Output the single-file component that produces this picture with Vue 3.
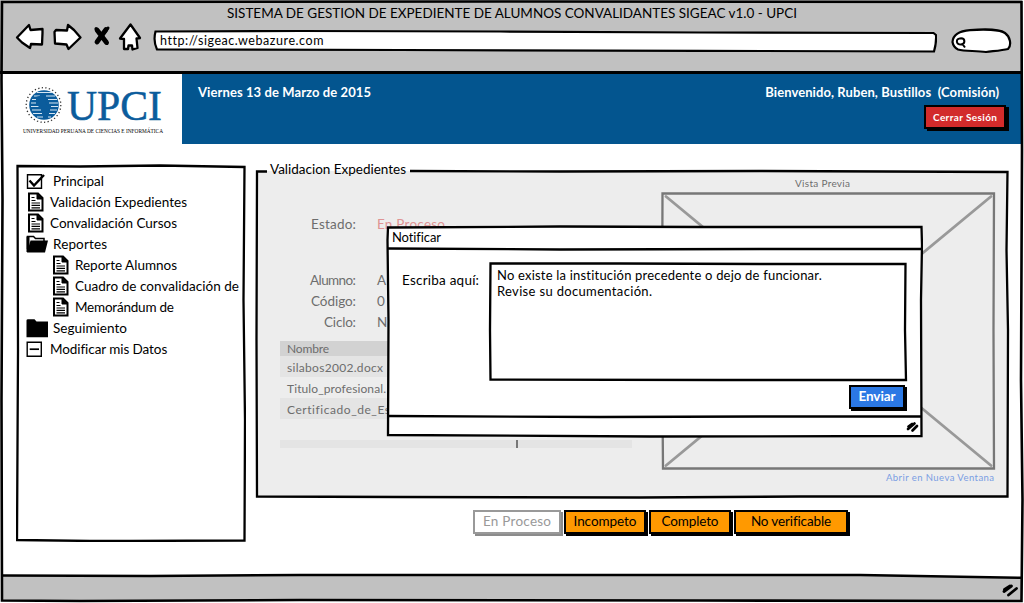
<script setup>
import { ref } from 'vue'

const docIcon = 'doc'
const menu = [
  { icon: 'check', label: 'Principal', w: 51, gap: 7 },
  { icon: docIcon, label: 'Validación Expedientes', w: 137, gap: 5 },
  { icon: docIcon, label: 'Convalidación Cursos', w: 127, gap: 5 },
  { icon: 'open', label: 'Reportes', w: 54, gap: 5 },
  { icon: docIcon, label: 'Reporte Alumnos', w: 102, gap: 5, sub: true },
  { icon: docIcon, label: 'Cuadro de convalidación de', w: 164, gap: 5, sub: true },
  { icon: docIcon, label: 'Memorándum de', w: 99, gap: 5, sub: true },
  { icon: 'folder', label: 'Seguimiento', w: 74, gap: 5 },
  { icon: 'minus', label: 'Modificar mis Datos', w: 117, gap: 5 }
]
const fields = [
  { label: 'Alumno:', lw: 46, value: 'A' },
  { label: 'Código:', lw: 45, value: '0' },
  { label: 'Ciclo:', lw: 32, value: 'N' }
]
const files = [
  { name: 'silabos2002.docx', w: 96 },
  { name: 'Titulo_profesional.', w: 99 },
  { name: 'Certificado_de_Es', w: 103 }
]
const actions = [
  { label: 'En Proceso', w: 88, tw: 68, off: true },
  { label: 'Incompeto', w: 82, tw: 63 },
  { label: 'Completo', w: 82, tw: 57 },
  { label: 'No verificable', w: 114, tw: 80 }
]
const message = ref([
  { text: 'No existe la institución precedente o dejo de funcionar.', w: 325 },
  { text: 'Revise su documentación.', w: 155 }
])
const greeting = 'Bienvenido, Ruben, Bustillos\u00a0 (Comisión)'

// Spreads the letters of a label over the given width.
const vFit = {
  mounted(el, { value }) {
    const n = el.textContent.length
    const natural = el.getBoundingClientRect().width
    const step = (value - natural) / (n - 1)
    el.style.letterSpacing = step + 'px'
    el.style.marginRight = -step + 'px'
  }
}
</script>

<template>
  <div class="window">
    <header class="chrome">
      <div class="title"><span v-fit="570" class="t">SISTEMA DE GESTION DE EXPEDIENTE DE ALUMNOS CONVALIDANTES SIGEAC v1.0 - UPCI</span></div>
      <div class="toolbar">
        <svg class="nav" width="130" height="32" viewBox="14 21 130 32">
          <g fill="#fff" stroke="#000" stroke-width="2.3" stroke-linejoin="round">
            <path d="M17 37.500L29 25L30.500 30L42.500 29V33L42 44.500L31 44L30 48L22 42.500Z" />
            <path d="M54.500 32L56 30L67 30.500L68 25L74 30L80.500 37.500L68.500 49L66.500 44.500L55 43.500Z" />
            <path d="M130.500 24.500L140 38L136.500 38.500L137.500 48L132.500 49.500L132 45.500L128.500 45.500L128 49L124 49L124 39L120 38.500Z" />
          </g>
          <path d="M97 30L106.500 42.500M106 29.500L97 42" stroke="#000" stroke-width="4.800" stroke-linecap="round" />
          <path d="M96 28.500L103 36M106 41L107 43.500M108 28L104 33" stroke="#000" stroke-width="3" stroke-linecap="round" />
        </svg>
        <div class="address">
          <svg class="frame" width="784" height="24" viewBox="153 29 784 24">
            <path d="M155.500 31.500L300 31L500 31.500L700 32.500L933.500 33L936 35Q936.500 43 934 51.500L700 50.800L400 50L157 49.500Q153 41 155.500 31.500Z" fill="#fff" stroke="#000" stroke-width="2.200" />
          </svg>
          <span v-fit="163" class="t">http://sigeac.webazure.com</span>
        </div>
        <svg class="search" width="62" height="26" viewBox="950 28 62 26">
          <path d="M952.500 42C953 35 960 31 970 30.200C984 29 1000 29.500 1005 33C1010 36.500 1012 45 1008 49C1002 50.500 994 51 986 52C975 50.500 965 51.500 958 49.500C954 47.500 953 45 952.500 42Z" fill="#fff" stroke="#000" stroke-width="2.200" />
          <path d="M961 38.200C965.500 38.200 965.500 44 961 44.500C956 44.500 955 38.500 961 38.200M962 43.500L965 47.500" fill="none" stroke="#000" stroke-width="2" />
        </svg>
      </div>
    </header>

    <div class="banner">
      <div class="logo">
        <svg width="180" height="70" viewBox="2 74 180 70">
          <circle cx="43.500" cy="105" r="17.300" fill="none" stroke="#333" stroke-width="1.300" stroke-dasharray="1.300 2.300" />
          <circle cx="44" cy="105" r="14.800" fill="#0b5c9c" />
          <path d="M37 92.500H52M34 96H40M46 96H55M32 99.500H36M48 99.500H57M31 103H38M49 103H58M31 106.500H40M51 106.500H58M32 110H41M50 110H57M33 113.500H42M49 113.500H55M37 117H43M48 117H51" stroke="#d5e5f2" stroke-width="1.100" />
          <path d="M36 97L42 95L47 98L45 103L50 107L47 115L44 118L42 110L36 104Z" fill="#0b5c9c" />
          <text x="67" y="120.300" font-size="42.500" textLength="95" lengthAdjust="spacingAndGlyphs" fill="#0b5c9c" stroke="#0b5c9c" stroke-width=".5">UPCI</text>
          <text x="23" y="132.800" font-size="6.200" textLength="140" lengthAdjust="spacingAndGlyphs" fill="#000">UNIVERSIDAD PERUANA DE CIENCIAS E INFORMÁTICA</text>
        </svg>
      </div>
      <div class="blue">
        <span v-fit="173" class="t date">Viernes 13 de Marzo de 2015</span>
        <div class="user">
          <span v-fit="234" class="t">{{ greeting }}</span>
          <button class="logout"><span v-fit="64" class="t">Cerrar Sesión</span></button>
        </div>
      </div>
    </div>

    <div class="body">
      <nav class="side">
        <svg class="frame" width="230" height="378" viewBox="16 164 230 378">
          <path d="M17.500 166L80 166.500L160 165.500L244.500 167L243.500 300L245 420L244.500 540.500L130 541L90 541L17 540L18 350Z" fill="#fff" stroke="#000" stroke-width="2.300" />
        </svg>
        <div v-for="m in menu" :key="m.label" class="item" :class="{ sub: m.sub }">
          <svg v-if="m.icon === 'check'" width="20" height="20" viewBox="0 0 20 20" fill="none" stroke="#000">
            <path d="M1.500 3.800H15.500V17.200H1.500Z" stroke-width="1.400" /><path d="M3.500 9.500L8 14.500L18 4" stroke-width="2.400" />
          </svg>
          <svg v-else-if="m.icon === 'doc'" width="19" height="20" viewBox="0 0 19 20" fill="none" stroke="#000">
            <path d="M3 1.500H12L16.500 6V18.500H3Z" stroke-width="2" /><path d="M11 1.500V7H16.500Z" fill="#000" />
            <path d="M5.500 5.500H8.500M5.500 8.500H9.500M5.500 11H14M5.500 13.400H14M5.500 15.800H14" stroke-width="1.200" />
          </svg>
          <svg v-else-if="m.icon === 'open'" width="22" height="20" viewBox="0 0 22 20">
            <path d="M1.500 15V2.500H7.500L9.500 4.500H18V8" fill="#fff" stroke="#000" stroke-width="1.500" /><path d="M4.500 6.500H22L19 18.500H1Z" /><path d="M0.500 2.500H3.500V18H0.500Z" />
          </svg>
          <svg v-else-if="m.icon === 'folder'" width="22" height="20" viewBox="0 0 22 20"><path d="M0.500 2.500Q0.500 1.300 2 1.300H8.500L10.500 3.500H22V19.300H0.500Z" /></svg>
          <svg v-else width="19" height="20" viewBox="0 0 19 20" fill="none" stroke="#000">
            <path d="M1.200 3.200H15.300V17.200H1.200Z" stroke-width="1.400" /><path d="M3.700 10.200H13" stroke-width="1.700" />
          </svg>
          <span class="mt" :style="{ marginLeft: m.gap + 'px' }"><span v-fit="m.w" class="t">{{ m.label }}</span></span>
        </div>
      </nav>

      <main class="main">
        <section class="panel">
          <svg class="frame" width="755" height="330" viewBox="255 169 755 330">
            <path d="M257 171H1007.500V496.500H257Z" fill="#ededed" />
            <path d="M267 171.500H257L256.500 340L257 496.500L400 497L640 497.500L800 496.500L1007.500 496.500L1008 330L1006.500 250L1007.500 172L760 171L560 171.500L410 171" fill="none" stroke="#000" stroke-width="2.300" />
          </svg>
          <div class="legend"><span v-fit="136" class="t">Validacion Expedientes</span></div>
          <div class="cols">
            <div class="data">
              <div class="row state"><span class="lab"><span v-fit="45" class="t">Estado:</span></span><span v-fit="68" class="t pink">En Proceso</span></div>
              <div v-for="f in fields" :key="f.label" class="row"><span class="lab"><span v-fit="f.lw" class="t">{{ f.label }}</span></span><span class="t">{{ f.value }}</span></div>
              <div class="table">
                <div class="th"><span v-fit="42" class="t">Nombre</span></div>
                <div v-for="f in files" :key="f.name" class="td"><span v-fit="f.w" class="t">{{ f.name }}</span></div>
                <div class="td"></div>
                <div class="td short"><i class="colline"></i></div>
              </div>
            </div>
            <div class="preview">
              <span class="cap"><span v-fit="55" class="t">Vista Previa</span></span>
              <svg width="335" height="280" viewBox="661 191 335 280" fill="none">
                <path d="M666 196.500L991 465.500M991 196.500L666 465.500" stroke="#999" stroke-width="2.800" stroke-linecap="round" />
                <path d="M662.500 193.500H994L993.500 330L994 468.500H663L662 340Z" stroke="#777" stroke-width="2.300" />
              </svg>
              <a class="link"><span v-fit="108" class="t">Abrir en Nueva Ventana</span></a>
            </div>
          </div>
        </section>
        <div class="actions">
          <button v-for="a in actions" :key="a.label" class="btn" :class="{ off: a.off }" :style="{ width: a.w + 'px' }"><span v-fit="a.tw" class="t">{{ a.label }}</span></button>
        </div>
      </main>
    </div>

    <footer class="foot">
      <svg class="frame" width="1024" height="30" viewBox="0 573 1024 30">
        <path d="M2 575.500L150 575.300L300 575L860 575L1021 578V601H2Z" fill="#c1c1c1" />
        <path d="M2 575.500L150 576L300 575L860 575L1021 577.800" fill="none" stroke="#000" stroke-width="2.400" />
        <path d="M1004 591.500L1011.500 586M1004.500 589.500L1010 586M1008.500 595L1016.500 588.500" stroke="#000" stroke-width="2.800" stroke-linecap="round" />
      </svg>
    </footer>

    <svg class="outline" width="1024" height="603" viewBox="0 0 1024 603" fill="none">
      <path d="M2 2L500 1.500L1021.500 2L1022 150L1021 380L1022.500 500L1021.500 601L700 600.500L300 600L80 601L2 600.500L1.500 400L2.500 200L1.500 80Z" stroke="#000" stroke-width="2.600" />
    </svg>

    <div class="modal">
      <svg class="frame" width="538" height="213" viewBox="385 225 538 213">
        <path d="M388 227.500L560 226.500L700 227L921.500 227L922 245L921 300L921.500 436L650 436.500L388 435L388.500 320L387.500 240Z" fill="#fff" stroke="#000" stroke-width="2.300" />
        <path d="M388 248.500L560 249.500L760 249L921 249M388 416L600 417L760 416.500L921 416.500" fill="none" stroke="#000" stroke-width="2.300" />
        <path d="M908 429L914.500 423.500M908.500 426.500L912 424M912.500 430.500L917 426" stroke="#000" stroke-width="2.700" stroke-linecap="round" />
      </svg>
      <div class="mtitle"><span v-fit="49" class="t">Notificar</span></div>
      <div class="mbody">
        <span class="mlabel"><span v-fit="77" class="t">Escriba aquí:</span></span>
        <div class="area">
          <svg class="frame" width="420" height="120" viewBox="488 262 420 120">
            <path d="M490.500 263.500L620 263.500L760 264L905.500 264L905 330L906 380L720 380L490.500 379.500L490 330Z" fill="#fff" stroke="#000" stroke-width="2.300" />
          </svg>
          <div v-for="l in message" :key="l.text" class="line"><span v-fit="l.w" class="t">{{ l.text }}</span></div>
        </div>
      </div>
      <div class="send"><button class="btn blueb"><span v-fit="37" class="t">Enviar</span></button></div>
    </div>
  </div>
</template>

<style>
html, body { margin: 0; background: #fff; overflow: hidden; }
</style>

<style scoped>
.window { position: relative; width: 1024px; height: 603px; display: flex; flex-direction: column; overflow: hidden; font-family: Lato, "Open Sans", sans-serif; font-size: 13.5px; color: #000; background: #fff; }
.window * { box-sizing: border-box; }
.t { display: inline-block; white-space: pre; flex: none; }
.frame { position: absolute; left: 0; top: 0; z-index: 0; display: block; }
svg { flex: none; display: block; }
button { font: inherit; padding: 0; margin: 0; }
.chrome { height: 74px; background: #c1c1c1; border-bottom: 3px solid #000; margin-right: 2px; }
.title { height: 21px; padding: 4px 0 0 227px; line-height: 18px; }
.toolbar { display: flex; padding-left: 14px; }
.address { position: relative; width: 784px; height: 24px; margin: 8px 13px 0 9px; padding-left: 7px; line-height: 22px; }
.address .t { position: relative; font-size: 12.500px; }
.search { margin-top: 7px; }
.banner { height: 70px; display: flex; padding-left: 2px; }
.logo { width: 180px; font-family: "Liberation Serif", serif; }
.blue { width: 839px; background: #03558f; color: #fff; font-weight: 700; font-size: 13px; display: flex; justify-content: space-between; padding: 8px 13px 0 16px; line-height: 20px; }
.user { display: flex; flex-direction: column; align-items: flex-end; width: 243px; padding-right: 9px; }
.logout { width: 82px; height: 24px; margin: 3px -7px 0 0; background: #d22b2b; border: 2px solid #000; box-shadow: 3px 2px 0 #000; color: #fff; font-size: 10px; }
.body { height: 431px; display: flex; padding: 20px 0 0 16px; gap: 9px; }
.side { position: relative; width: 230px; height: 378px; padding: 6px 0 0 10px; }
.item { position: relative; height: 21px; display: flex; align-items: center; }
.item.sub { padding-left: 25px; }
.main { width: 755px; padding-top: 5px; }
.panel { position: relative; height: 330px; color: #6d6d6d; }
.legend { position: relative; padding-left: 15px; height: 14px; line-height: 1px; color: #000; }
.cols { position: relative; display: flex; height: 316px; }
.data { width: 383px; padding: 31px 0 0 25px; }
.row { display: flex; height: 21px; line-height: 21px; gap: 21px; }
.state { margin-bottom: 35px; }
.lab { width: 76px; text-align: right; display: flex; justify-content: flex-end; }
.pink { color: #df9494; }
.table { margin-top: 8px; width: 352px; font-size: 12px; }
.th { height: 15px; line-height: 16px; background: #d2d2d2; padding-left: 7px; }
.td { height: 21px; line-height: 23px; padding-left: 7px; }
.td:nth-child(even) { background: #e4e4e4; }
.td.short { height: 8px; padding-left: 236px; }
.colline { display: block; width: 2px; height: 8px; background: #777; }
.preview { width: 340px; margin-left: 23px; display: flex; flex-direction: column; }
.cap { width: 323px; height: 8px; line-height: 0; display: flex; justify-content: center; font-size: 10px; }
.link { align-self: flex-end; font-size: 9.500px; line-height: 14px; color: #7a9de3; margin-right: 7px; }
.actions { display: flex; gap: 3px; padding: 11px 0 0 218px; }
.btn { height: 24px; border: 2px solid #000; background: #f90; box-shadow: 2px 2px 0 #000; color: #000; line-height: 18px; padding-bottom: 2px; }
.btn.off { background: #fff; border-color: #999; box-shadow: 2px 2px 0 #8c8c8c; color: #999; }
.foot { position: relative; height: 28px; margin-top: -2px; }
.outline { position: absolute; left: 0; top: 0; }
.modal { position: absolute; left: 385px; top: 225px; width: 538px; height: 213px; }
.mtitle { position: relative; height: 24px; padding-left: 7px; line-height: 25px; font-size: 13px; }
.mbody { position: relative; display: flex; padding: 13px 0 0 17px; }
.mlabel { width: 86px; padding-top: 8px; line-height: 20px; }
.area { position: relative; width: 420px; height: 120px; padding: 4px 9px; }
.line { position: relative; height: 16px; line-height: 18px; font-size: 13px; }
.send { position: relative; display: flex; justify-content: flex-end; padding: 3px 18px 0 0; }
.btn.blueb { width: 56px; background: #2b78e4; color: #fff; font-weight: 700; }
</style>
